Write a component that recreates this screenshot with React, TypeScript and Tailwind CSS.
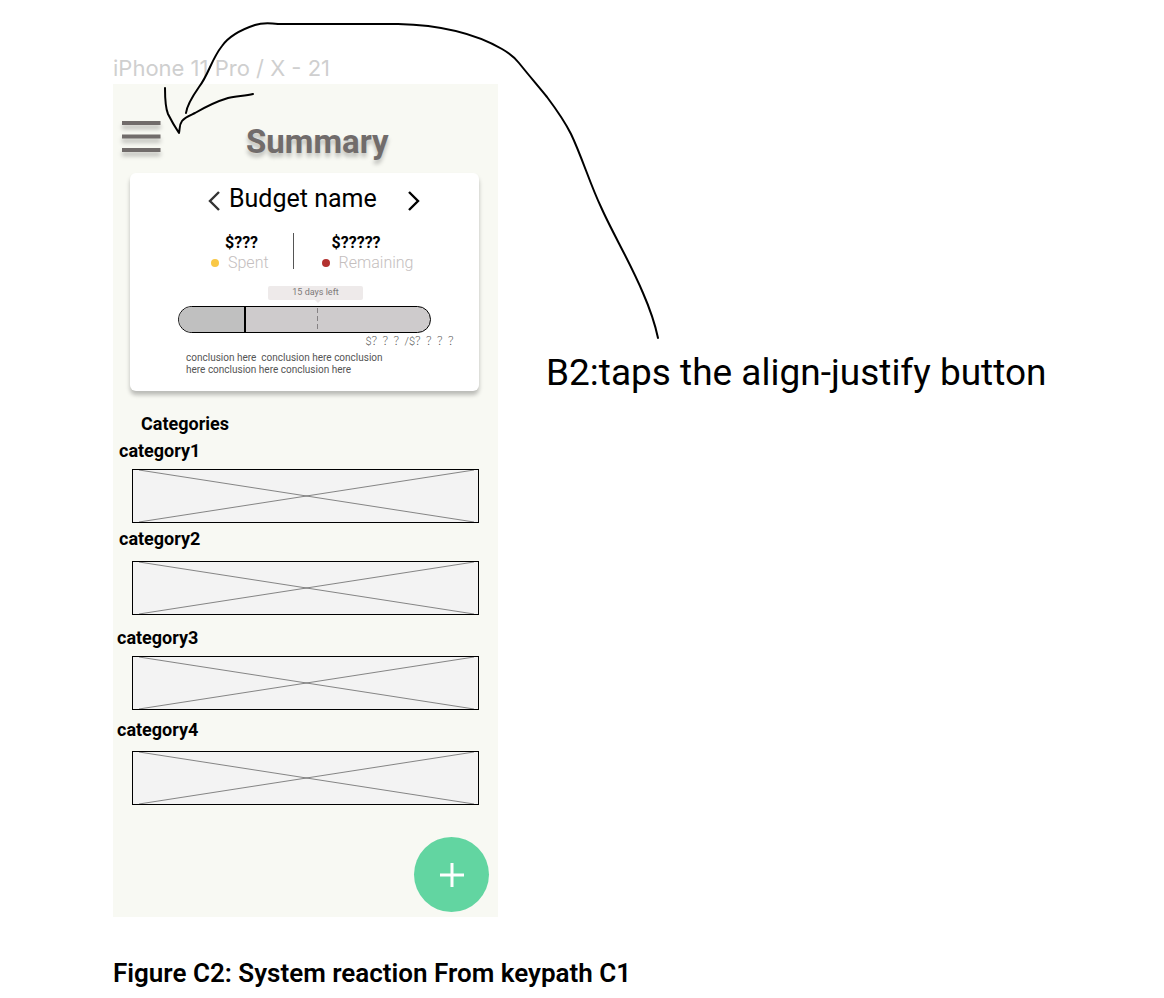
import React from "react";

type Category = { name: string; row: string; label: string };

const categories: Category[] = [
  { name: "category1", row: "gap-2", label: "pl-1.5" },
  { name: "category2", row: "mt-1.5 gap-3", label: "pl-1.5" },
  { name: "category3", row: "mt-[13px] gap-2", label: "pl-1" },
  { name: "category4", row: "mt-2.5 gap-[11px]", label: "pl-1" },
];

function MenuButton() {
  return (
    <button type="button" aria-label="Menu" className="h-9 w-10 shrink-0">
      <svg viewBox="0 0 40 36" className="h-9 w-10 drop-shadow-[0_4px_2px_rgba(0,0,0,0.25)]">
        <path d="M1 3H39.500M1 16.500H39.500M1 30H39.500" stroke="#716c6b" strokeWidth="4" />
      </svg>
    </button>
  );
}

function Chevron({ direction }: { direction: "left" | "right" }) {
  const left = direction === "left";
  return (
    <button type="button" aria-label={left ? "Previous budget" : "Next budget"} className="mt-1 h-6 w-4">
      <svg viewBox="0 0 16 24" className="h-6 w-4" fill="none" strokeWidth="2.4">
        {left ? (
          <path d="M13 3L4 12L13 21" stroke="#333" />
        ) : (
          <path d="M3 3L12 12L3 21" stroke="#000" />
        )}
      </svg>
    </button>
  );
}

function Stat({ amount, label, dot, pad }: { amount: string; label: string; dot: string; pad: string }) {
  return (
    <div>
      <p className={`text-base/5 font-bold ${pad}`}>{amount}</p>
      <p className="flex items-center gap-[9px] text-base/5 font-light text-[#c4bebe]">
        <span className={`size-2 rounded-full ${dot}`} />
        {label}
      </p>
    </div>
  );
}

function BudgetBar() {
  return (
    <div className="ml-12 flex h-[27px] w-[253px] overflow-hidden rounded-full border border-black bg-[#cecbcc]">
      <div className="w-[67px] border-r-2 border-black bg-[#c0c0c0]" />
      <svg viewBox="0 0 74 25" className="w-[74px]">
        <path d="M71.500 1V25" stroke="#858183" strokeDasharray="5 3" />
      </svg>
    </div>
  );
}

function BudgetCard() {
  return (
    <section className="mt-[9px] mr-[19px] ml-[17px] rounded-md bg-white pt-2.5 pb-[15px] shadow-[0_4px_4px_rgba(0,0,0,0.25)]">
      <div className="flex h-8 items-center pl-[76px]">
        <Chevron direction="left" />
        <h2 className="ml-[7px] w-[177px] text-[25px]/8">Budget name</h2>
        <Chevron direction="right" />
      </div>
      <div className="mt-[18px] flex pl-[81px]">
        <Stat amount="$???" label="Spent" dot="bg-[#f9c846]" pad="pl-3.5" />
        <div className="mr-7 ml-6 h-9 w-px bg-[#555]" />
        <Stat amount="$?????" label="Remaining" dot="bg-[#b3312f]" pad="pl-2.5" />
      </div>
      <div className="mt-[13px] ml-[138px] flex w-[95px] flex-col items-center">
        <p className="h-3.5 w-full rounded-xs bg-[#eeeaea] text-center text-[9px]/3 text-[#7d7979]">15 days left</p>
        <svg viewBox="0 0 6 3" className="ml-1 h-[3px] w-1.5">
          <path d="M0 0H6L3 3Z" fill="#eeeaea" />
        </svg>
      </div>
      <div className="mt-[3px]">
        <BudgetBar />
      </div>
      <p className="mt-[3px] pr-5 text-right font-['Roboto','Noto_Sans_CJK_SC',sans-serif] text-[11px]/3 font-light text-[#555]">
        $？？？/$？？？？
      </p>
      <p className="mt-1 ml-14 text-[10px]/3 text-[#555]">
        conclusion here&nbsp; conclusion here conclusion
        <br />
        here conclusion here conclusion here
      </p>
    </section>
  );
}

function Placeholder() {
  return (
    <div className="mx-[19px] h-[54px] border border-black bg-[#f3f3f3]">
      <svg viewBox="0 0 345 52" preserveAspectRatio="none" className="h-full w-full">
        <path d="M6 0L341 52M341 0L6 52" stroke="#555" strokeWidth="0.7" fill="none" />
      </svg>
    </div>
  );
}

function Phone() {
  return (
    <div className="w-[385px] shrink-0 bg-[#f8f9f3] pt-9 pb-[5px]">
      <header className="flex items-start pl-2">
        <MenuButton />
        <h1 className="ml-[85px] text-[33px]/11 font-bold text-[#716c6b] [text-shadow:0_4px_4px_rgba(0,0,0,0.25)]">
          Summary
        </h1>
      </header>
      <BudgetCard />
      <h2 className="mt-[23px] pl-7 text-lg/5 font-bold">Categories</h2>
      <ul className="mt-[7px]">
        {categories.map((c) => (
          <li key={c.name} className={`flex flex-col ${c.row}`}>
            <h3 className={`text-lg/5 font-bold ${c.label}`}>{c.name}</h3>
            <Placeholder />
          </li>
        ))}
      </ul>
      <div className="mt-8 flex justify-end pr-[9px]">
        <button type="button" aria-label="Add" className="flex size-[75px] items-center justify-center rounded-full bg-[#62d5a1]">
          <svg viewBox="0 0 24 24" className="size-6">
            <path d="M0 12H24M12 0V24" stroke="#fff" strokeWidth="3" />
          </svg>
        </button>
      </div>
    </div>
  );
}

function Arrow() {
  return (
    <svg
      viewBox="0 0 700 360"
      className="pointer-events-none absolute top-0 left-0 h-[360px] w-[700px]"
      fill="none"
      stroke="#000"
      strokeWidth="2"
      strokeLinecap="round"
      strokeLinejoin="round"
    >
      <path d="M658 338C655 324 650 309 643 293C630 262 612 232 601 207C590 184 582 157 571 134C565 122 556 109 547 97C538 86 527 73 519 63C514 57 509 53 502 49C476 34 442 25 398 24H278C269 23 261 23 255 25C240 30 229 36 222 46C211 60 209 74 199 87C192 97 187 105 186 113" />
      <path d="M165 88C165 99 165 107 168 114C172 122 175 127 179 133C180 129 179 125 182 121C185 117 191 115 195 113C207 106 218 101 228 98C237 96 246 96 253 94" />
    </svg>
  );
}

export default function App() {
  return (
    <main className="relative min-h-screen bg-white pt-[54px] pl-[113px] font-['Roboto',sans-serif] text-black">
      <figure>
        <p className="mb-0.5 font-['Inter',sans-serif] text-[22px]/7 text-[#cfcfcf]">iPhone 11 Pro / X - 21</p>
        <div className="flex items-start">
          <Phone />
          <p className="mt-[265px] ml-12 text-[37px]/12">B2:taps the align-justify button</p>
        </div>
        <figcaption className="mt-10 text-[26px]/8 font-semibold">Figure C2: System reaction From keypath C1</figcaption>
      </figure>
      <Arrow />
    </main>
  );
}
